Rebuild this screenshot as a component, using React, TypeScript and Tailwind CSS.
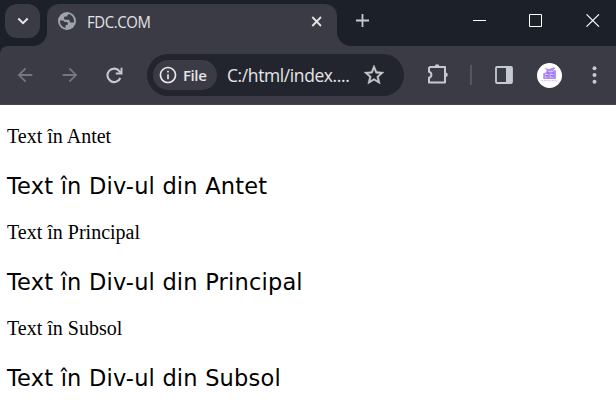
import React from "react";
import { MdStarOutline, MdArrowBack, MdArrowForward, MdInfoOutline } from "react-icons/md";

const sections = ["Antet", "Principal", "Subsol"];

function Globe() {
  return (
    <svg className="ml-[11px] mt-[8px] shrink-0" width="18" height="18" viewBox="0 0 18 18">
      <circle cx="9" cy="9" r="9" fill="#9fa4ac" />
      <path
        d="M10.8 2.1C9.6 3 9.2 3.6 9.2 4.6H7.4C6.5 4.6 6 5.2 6 6.1c0 1 .6 1.6 1.5 1.6h2.7c1 0 1.5.7 1.5 1.5 0 .9.6 1.3 1.4 1.3H16c.5-3.7-1.5-7.2-5.2-8.4ZM2 8.5c-.3 3.6 2.2 6.8 5.5 7.4v-1.6c0-.9.6-1.5 1.5-1.5h.9v-1.3c0-1-.6-1.6-1.5-1.6H6.6C5.8 9 5 8.5 4.5 8.5Z"
        fill="#3a3b44"
      />
    </svg>
  );
}

function TabStrip() {
  return (
    <div className="flex h-[46px] items-start bg-[#1c2028] pt-1">
      <button className="ml-[5px] flex h-[34px] w-[35px] shrink-0 items-center justify-center rounded-[12px] bg-[#3a3b44]">
        <svg width="12" height="8" viewBox="0 0 12 8" fill="none" stroke="#e6e7ea" strokeWidth="2">
          <path d="M1.3 1.5 6 6.2l4.7-4.7" />
        </svg>
      </button>
      <div className="relative ml-[7px] flex h-[42px] w-[290px] shrink-0 items-start rounded-t-[12px] bg-[#3a3b44]">
        <svg className="absolute -left-[14px] bottom-0" width="14" height="14" fill="#3a3b44"><path d="M14 0v14H0A14 14 0 0 0 14 0Z" /></svg>
        <svg className="absolute -right-[14px] bottom-0" width="14" height="14" fill="#3a3b44"><path d="M0 0v14h14A14 14 0 0 1 0 0Z" /></svg>
        <Globe />
        <span className="ml-[11px] mt-[7px] origin-left scale-x-[.93] whitespace-nowrap font-['Open_Sans',sans-serif] text-[16px] leading-[22px] tracking-[-0.4px] text-[#e3e3e6]">FDC.COM</span>
        <svg className="ml-auto mr-[15px] mt-3" width="11" height="11" viewBox="0 0 11 11" stroke="#e3e3e6" strokeWidth="1.8"><path d="m1.3 1 8.7 9M10 1l-8.7 9" /></svg>
      </div>
      <svg className="ml-[19px] mt-[10px] shrink-0" width="13" height="13" viewBox="0 0 13 13" stroke="#c7c9d2" strokeWidth="1.8"><path d="M6.5 0v13M0 6.5h13" /></svg>
      <div className="ml-auto mr-[16px] mt-[10px] flex gap-[43px] text-white">
        <svg className="-ml-px" width="14" height="13" stroke="currentColor"><path d="M0 6.5h13" /></svg>
        <svg className="-ml-px" width="13" height="13" fill="none" stroke="currentColor"><path d="M.5.5h12v12H.5Z" /></svg>
        <svg className="ml-[1px]" width="14" height="13" stroke="currentColor" strokeWidth="1.1"><path d="m.5.3 12.5 12.4M13 .3.5 12.7" /></svg>
      </div>
    </div>
  );
}

function Avatar() {
  return (
    <svg width="25" height="25" viewBox="0 0 25 25">
      <circle cx="12.5" cy="12.5" r="12.5" fill="#fff" />
      <path d="M7.5 5 12 6l5-1.800 1.500 1.300-2.500 1.500 3 .6V16H6.200v-5.500L9 9.300l.7-2Z" fill="#b18cf5" />
      <path d="M8 11.500h3m2 0h3.500M8 14h2m2.500 0h3.500M11.500 8.500l5-.3" stroke="#e2d2ff" strokeWidth=".9" />
      <path d="M10 10h2m3 0h2m-8 2.800h2m3 0h3" stroke="#8f5fea" strokeWidth=".9" />
      <path d="M4.500 17.700h16" stroke="#c9bade" strokeWidth=".9" strokeDasharray="2 .6" />
    </svg>
  );
}

function Toolbar() {
  return (
    <div className="bg-[#1c2028]">
      <div className="flex h-[59px] items-center rounded-tl-[8px] border-b border-[#484647] bg-[#3a3b44]">
        <MdArrowBack size={22} color="#75777e" className="ml-[14px] shrink-0" />
        <MdArrowForward size={22} color="#75777e" className="ml-[23px] shrink-0" />
        <svg className="ml-[25px] mr-[3px] shrink-0" width="17" height="17" viewBox="0 0 17 17" fill="none" stroke="#c7c9d2" strokeWidth="2.1">
          <path d="M14.300 11A6.700 6.700 0 1 1 13.400 4.200L15 5.800" />
          <path d="M15.500.8v5.700H9.800" strokeWidth="1.900" />
        </svg>
        <div className="ml-[21px] flex h-[42px] w-[257px] shrink-0 items-center rounded-full bg-[#22252d] pl-[6px]">
          <div className="flex h-[30px] w-[64px] shrink-0 items-center rounded-full bg-[#3a3b44] pl-[5px]">
            <MdInfoOutline size={20} color="#e9e9eb" className="shrink-0" />
            <span className="ml-[5px] font-['Open_Sans',sans-serif] text-[15px] font-semibold leading-5 tracking-[-0.4px] text-[#e3e3e6]">File</span>
          </div>
          <div className="ml-[10px] w-[124px]">
            <span className="inline-block origin-left scale-x-[.97] whitespace-nowrap font-['Open_Sans',sans-serif] text-[18px] leading-6 tracking-[-0.4px] text-[#e6e6e9]">C:/html/index....</span>
          </div>
          <MdStarOutline size={24} color="#c8c9cd" className="ml-[11px] shrink-0 stroke-[#c8c9cd] stroke-[.4px]" />
        </div>
        <svg className="ml-[23px] shrink-0" width="22" height="22" viewBox="0 0 22 22" fill="none" stroke="#c7c9d2" strokeWidth="2" strokeLinejoin="round">
          <path d="M3 3h15v15.500H2v-4.700c1.500-.4 2.400-1.500 2.400-3S3.500 8.200 2 7.800V4Z" />
          <path d="M7.800 2.500a2.300 2.300 0 0 1 4.600 0ZM18.500 8.500a2.300 2.300 0 0 1 0 4.600Z" fill="#c7c9d2" stroke="none" />
        </svg>
        <div className="ml-[21px] h-5 w-[2px] shrink-0 bg-[#55565f]" />
        <svg className="ml-[23px] shrink-0" width="18" height="18" viewBox="0 0 18 18"><rect x="1" y="1" width="16" height="16" rx="1" fill="none" stroke="#c7c9d2" strokeWidth="1.800" /><path d="M11 1h6v16h-6z" fill="#c7c9d2" /></svg>
        <div className="ml-[24px] shrink-0"><Avatar /></div>
        <svg className="ml-[30px] shrink-0" width="5" height="18" fill="#c7c9d2"><circle cx="2.5" cy="2.300" r="2" /><circle cx="2.500" cy="9" r="2" /><circle cx="2.500" cy="15.700" r="2" /></svg>
      </div>
    </div>
  );
}

export default function App() {
  return (
    <div className="h-[410px] w-[616px] overflow-hidden bg-white">
      <TabStrip />
      <Toolbar />
      <main className="pl-[7px] pt-[19px] text-black">
        {sections.map((name) => (
          <section key={name} className="h-[96px]">
            <p className="h-[49px] whitespace-nowrap font-['Liberation_Serif',serif] text-[20px] leading-[24px]">Text în {name}</p>
            <div className="whitespace-nowrap font-['DejaVu_Sans',sans-serif] text-[22.5px] leading-[26px] tracking-[0.2px]">Text în Div-ul din {name}</div>
          </section>
        ))}
      </main>
    </div>
  );
}
